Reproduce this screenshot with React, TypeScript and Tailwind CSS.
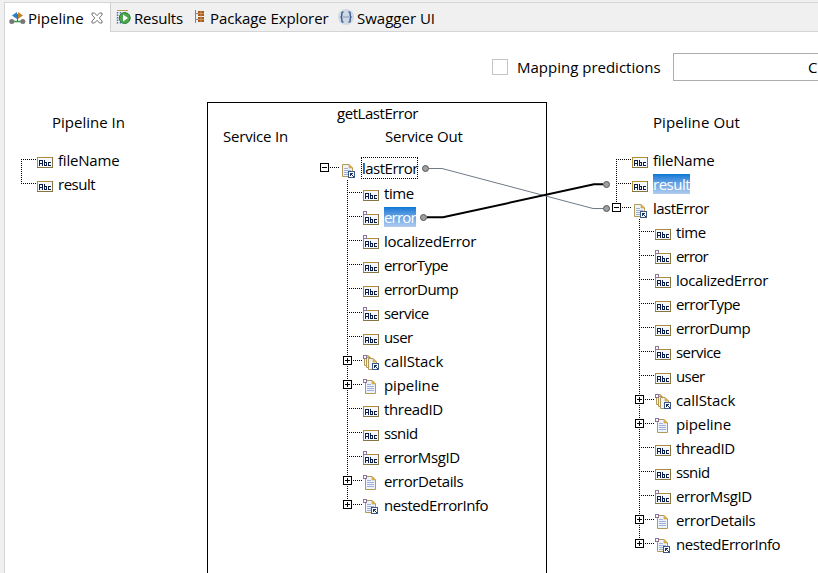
import type { ReactNode } from "react";

type IconKind = "abc" | "doc" | "ref" | "docs";
type Field = {
  name: string;
  icon: IconKind;
  tracking: string;
  optional?: boolean;
  expander?: "+" | "-";
  selected?: boolean;
};

const ERROR_FIELDS: Field[] = [
  { name: "time", icon: "abc", tracking: "tracking-[-0.4px]" },
  { name: "error", icon: "abc", tracking: "tracking-[-0.8px]", optional: true },
  { name: "localizedError", icon: "abc", tracking: "tracking-[-0.3px]", optional: true },
  { name: "errorType", icon: "abc", tracking: "tracking-[-0.6px]" },
  { name: "errorDump", icon: "abc", tracking: "tracking-[-0.55px]" },
  { name: "service", icon: "abc", tracking: "tracking-[-0.55px]", optional: true },
  { name: "user", icon: "abc", tracking: "tracking-[-0.6px]" },
  { name: "callStack", icon: "docs", tracking: "tracking-[-0.1px]", optional: true, expander: "+" },
  { name: "pipeline", icon: "doc", tracking: "tracking-[-0.1px]", optional: true, expander: "+" },
  { name: "threadID", icon: "abc", tracking: "tracking-[-0.35px]" },
  { name: "ssnid", icon: "abc", tracking: "tracking-[-0.6px]" },
  { name: "errorMsgID", icon: "abc", tracking: "tracking-[-0.4px]", optional: true },
  { name: "errorDetails", icon: "doc", tracking: "tracking-[-0.35px]", optional: true, expander: "+" },
  { name: "nestedErrorInfo", icon: "ref", tracking: "tracking-[-0.45px]", optional: true, expander: "+" },
];

const FILE_NAME: Field = { name: "fileName", icon: "abc", tracking: "tracking-[-0.2px]" };
const RESULT: Field = { name: "result", icon: "abc", tracking: "tracking-[-0.5px]" };
const LAST_ERROR: Field = { name: "lastError", icon: "ref", tracking: "tracking-[-0.5px]", expander: "-" };

function Page({ x, y, w = 11, h = 14, lines = true }: { x: number; y: number; w?: number; h?: number; lines?: boolean }) {
  return (
    <g transform={`translate(${x} ${y})`}>
      <path d={`M.5 .5H${w - 4}L${w - 0.5} 4V${h - 0.5}H.5Z`} fill="#eef3fb" stroke="#b09a55" />
      <path d={`M${w - 4} .5V4H${w - 0.5}Z`} fill="#e3b54c" stroke="#c79a3a" strokeWidth=".6" />
      {lines && <path d={`M2 4.5H${w - 5}M2 6.5H${w - 2}M2 8.5H${w - 2}M2 10.5H${w - 2}`} stroke="#9db1d6" />}
    </g>
  );
}

function RefBadge({ x, y }: { x: number; y: number }) {
  return (
    <g transform={`translate(${x} ${y})`}>
      <rect x=".5" y=".5" width="6" height="6" fill="#fff" stroke="#3b5788" />
      <path d="M2 2H5V3H4V4H5V5H6V6H5V5H4V4H3V5H2Z" fill="#17315f" />
    </g>
  );
}

function TypeIcon({ kind, optional, root }: { kind: IconKind; optional?: boolean; root?: boolean }) {
  return (
    <svg width="16" height="24" viewBox="0 0 16 24" className="shrink-0 overflow-visible">
      {kind === "abc" && (
        <g>
          <path d="M0 10H16V21H0Z" fill="#b08e38" />
          <path d="M0 21V20H15V10H16V21Z" fill="#85743f" />
          <path d="M1 11H15V20H1Z" fill="#f4f8fc" />
          <g fill="#0a1a4a" shapeRendering="crispEdges">
            <path d="M2 13H6V19H5V17H3V19H2ZM3 14V16H5V14Z" fillRule="evenodd" />
            <path d="M7 13H8V15H10V19H7ZM8 16V18H9V16Z" fillRule="evenodd" />
            <path d="M11 15H14V16H12V18H14V19H11Z" />
          </g>
        </g>
      )}
      {kind === "doc" && <Page x={2} y={8} />}
      {kind === "ref" && (
        <g>
          <Page x={2} y={root ? 9 : 8} h={13} />
          <RefBadge x={8} y={root ? 16 : 15} />
        </g>
      )}
      {kind === "docs" && (
        <g>
          <Page x={1} y={7} w={8} h={11} lines={false} />
          <Page x={3} y={9} w={8} h={11} lines={false} />
          <Page x={5} y={10} w={9} h={12} lines={false} />
          <RefBadge x={9} y={15} />
        </g>
      )}
      {optional && <rect x=".5" y="7.5" width="3" height="3" fill="#fff" stroke="#8b7596" />}
    </svg>
  );
}

function Gutter({ up, down, expander }: { up: boolean; down: boolean; expander?: "+" | "-" }) {
  return (
    <svg width="20" height="24" viewBox="0 0 20 24" className="shrink-0" shapeRendering="crispEdges">
      {up && <path d="M4.5 0V12" stroke="#000" strokeDasharray="1 1" />}
      {down && <path d="M4.5 12V24" stroke="#000" strokeDasharray="1 1" />}
      <path d="M4 12.5H19" stroke="#000" strokeDasharray="1 1" />
      {expander && (
        <g>
          <rect x=".5" y="8.5" width="8" height="8" fill="#fff" stroke="#000" />
          <path d="M2 12.5H7" stroke="#000" />
          {expander === "+" && <path d="M4.5 10V15" stroke="#000" />}
        </g>
      )}
    </svg>
  );
}

function Row({ field, up, down, root }: { field: Field; up: boolean; down: boolean; root?: boolean }) {
  return (
    <div className="flex h-6">
      <Gutter up={up} down={down} expander={field.expander} />
      <TypeIcon kind={field.icon} optional={field.optional} root={root} />
      <span
        className={
          "ml-[5px] mt-[3px] h-5 leading-5 " +
          field.tracking +
          (field.selected ? " bg-linear-to-b from-[#0078d7] to-[#b0cdee] text-white" : "")
        }
      >
        {field.name}
      </span>
    </div>
  );
}

function Tree({ fields, joined }: { fields: Field[]; joined: boolean }) {
  return (
    <div className="flex flex-col">
      {fields.map((f, i) => (
        <Row key={f.name} field={f} up={joined || i > 0} down={i < fields.length - 1} root={!joined} />
      ))}
    </div>
  );
}

function Tab({ icon, children }: { icon: ReactNode; children: ReactNode }) {
  return (
    <div className="flex items-center">
      {icon}
      <span className="pt-[2px]">{children}</span>
    </div>
  );
}

function TabBar() {
  return (
    <div className="flex h-[30px] border-t border-[#d5d5d5] bg-[#f0f0f0]">
      <div className="flex w-[106px] items-center border-r border-[#d0d0d0] bg-white pl-1">
        <svg width="17" height="16" viewBox="0 0 17 16" className="mr-[2px]">
          <path d="M3 11.5H14" stroke="#3f9a4d" strokeWidth="1.6" />
          <path d="M8 2V9L3 5.5Z" fill="#2b83c4" />
          <path d="M9 2V9L14 5.5Z" fill="#c98020" />
          <path d="M8.5 4V11" stroke="#4b6d7c" />
          <circle cx="2.8" cy="11.5" r="2.5" fill="#777" />
          <circle cx="13.8" cy="11.5" r="2.5" fill="#777" />
        </svg>
        <span className="w-[63px]">Pipeline</span>
        <svg width="12" height="12" viewBox="0 0 12 12" fill="#fff" stroke="#777">
          <path d="M1 1H3.5L6 3.7L8.5 1H11V3L8.2 6L11 9V11H8.5L6 8.3L3.5 11H1V9L3.8 6L1 3Z" />
        </svg>
      </div>
      <div className="flex h-[29px] flex-1 border-b border-[#d5d5d5]">
        <div className="ml-[5px] flex w-[78px] tracking-[-0.2px]">
          <Tab
            icon={
              <svg width="16" height="18" viewBox="0 0 16 18" className="mr-[2px]">
                <path d="M1 2.5H12" stroke="#b69b57" />
                <path d="M1.5 4V16M4.5 4V16" stroke="#4775ac" strokeDasharray="1.5 1" strokeWidth="1.5" />
                <circle cx="8.7" cy="10" r="5.5" fill="#4ca64d" stroke="#297d38" />
                <path d="M7 6.5V13.5L12 10Z" fill="#fff" />
              </svg>
            }
          >
            Results
          </Tab>
        </div>
        <div className="flex w-[144px] tracking-[-0.1px]">
          <Tab
            icon={
              <svg width="12" height="16" viewBox="0 0 12 16" className="mr-[4px]">
                <path d="M1.5 1V14M1.5 4.5H5M1.5 10.5H5" stroke="#7d8491" fill="none" />
                <path d="M4 2H10V7H4ZM4 8H10V13H4Z" fill="#a55c21" />
                <path d="M7 2V13M4 4.5H10M4 10.5H10" stroke="#e0aa70" strokeWidth=".7" />
              </svg>
            }
          >
            Package Explorer
          </Tab>
        </div>
        <Tab
          icon={
            <svg width="16" height="16" viewBox="0 0 16 16" className="mr-[3px]">
              <circle cx="8" cy="8" r="8" fill="#cfd8e5" />
              <path
                d="M5.5 3H5Q3.8 3 3.8 4.5V6.5Q3.8 8 2.5 8Q3.8 8 3.8 9.5V11.5Q3.8 13 5 13H5.5M10.5 3H11Q12.2 3 12.2 4.5V6.5Q12.2 8 13.5 8Q12.2 8 12.2 9.5V11.5Q12.2 13 11 13H10.5"
                fill="none"
                stroke="#3c5c8c"
                strokeWidth="1.4"
              />
              <path d="M5.5 8H11" stroke="#3c5c8c" strokeDasharray="1 1" />
            </svg>
          }
        >
          Swagger UI
        </Tab>
      </div>
    </div>
  );
}

function Endpoint({ x, y }: { x: number; y: number }) {
  return <circle cx={x} cy={y} r="3" fill="#a0a0a0" stroke="#555" />;
}

function MappingLines() {
  return (
    <svg width="818" height="573" viewBox="0 0 818 573" className="pointer-events-none absolute left-0 top-0" fill="none">
      <path d="M429 168.5H442L593 208.5H603" stroke="#6f7b88" />
      <path d="M427 217.3H443L594 184.3H603" stroke="#000" strokeWidth="2" />
      <Endpoint x={425.5} y={168.5} />
      <Endpoint x={423.5} y={217.5} />
      <Endpoint x={606.5} y={184.5} />
      <Endpoint x={606.5} y={208.5} />
    </svg>
  );
}

export default function App() {
  return (
    <div className="relative flex h-[573px] w-[818px] flex-col overflow-hidden bg-[#f0f0f0] pl-1 pt-[2px] font-['Open_Sans','Noto_Sans',sans-serif] text-[15px] leading-5 whitespace-nowrap text-black">
      <div className="flex flex-1 flex-col border-l border-[#d5d5d5] bg-white">
        <TabBar />
        <div className="mt-[21px] flex h-7 items-center">
          <div className="ml-[487px] h-4 w-4 shrink-0 border border-[#c4c4c4]" />
          <span className="ml-[9px] w-[156px] shrink-0">Mapping predictions</span>
          <div className="flex h-7 flex-1 items-center border border-r-0 border-[#adadad] pl-[134px]">C</div>
        </div>
        <div className="mt-[21px] flex flex-1">
          <section className="w-[202px] pt-[10px]">
            <h2 className="pl-[47px]">Pipeline In</h2>
            <div className="mt-[15px] pl-3">
              <Tree joined={false} fields={[FILE_NAME, RESULT]} />
            </div>
          </section>
          <section className="w-[340px] border border-b-0 border-black">
            <h2 className="pl-[129px] tracking-[-0.45px]">getLastError</h2>
            <div className="mt-[3px] flex tracking-[-0.2px]">
              <span className="w-[162px] pl-[15px]">Service In</span>
              <span className="pl-[15px]">Service Out</span>
            </div>
            <div className="mt-[9px] flex h-[25px] pl-[112px]">
              <Gutter up={false} down={false} expander="-" />
              <TypeIcon kind="ref" root />
              <span className="ml-[5px] mt-[2px] h-[22px] w-[57px] border border-dotted border-black leading-5 tracking-[-0.5px]">
                lastError
              </span>
            </div>
            <div className="pl-[135px]">
              <Tree joined fields={ERROR_FIELDS.map((f) => (f.name === "error" ? { ...f, selected: true } : f))} />
            </div>
          </section>
          <section className="flex-1 pt-[10px]">
            <h2 className="pl-[106px] tracking-[0.1px]">Pipeline Out</h2>
            <div className="mt-[15px] pl-[65px]">
              <Tree joined={false} fields={[FILE_NAME, { ...RESULT, selected: true }, LAST_ERROR]} />
            </div>
            <div className="pl-[88px]">
              <Tree joined fields={ERROR_FIELDS} />
            </div>
          </section>
        </div>
      </div>
      <MappingLines />
    </div>
  );
}
